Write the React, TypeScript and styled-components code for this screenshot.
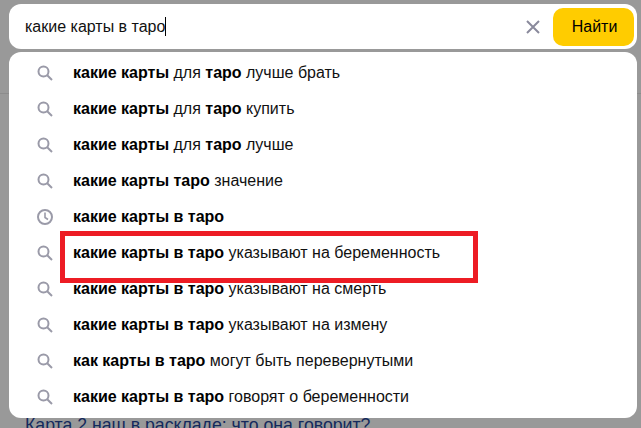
import { FC } from "react";
import styled, { createGlobalStyle } from "styled-components";

const GlobalStyle = createGlobalStyle`
  html, body {
    margin: 0;
    padding: 0;
    height: 100%;
    overflow: hidden;
    background: #999;
    font-family: "Liberation Sans", Arial, sans-serif;
  }
`;

const Page = styled.div`
  position: relative;
  width: 641px;
  height: 428px;
  overflow: hidden;
  padding: 4px 4px 0 9px;
  box-sizing: border-box;
  background: #999;
`;

const Divider = styled.div`
  position: absolute;
  left: 0;
  right: 0;
  top: 93px;
  height: 1px;
  background: #8c8c8c;
`;

const SearchBar = styled.div`
  position: relative;
  display: flex;
  align-items: center;
  height: 45px;
  padding: 0 3px 0 16px;
  background: #fff;
  border-radius: 12px;
`;

const Query = styled.div`
  flex: 1;
  font-size: 16px;
  color: #111;
`;

const Caret = styled.span`
  display: inline-block;
  width: 1px;
  height: 19px;
  background: #000;
  vertical-align: -4px;
`;

const ClearIcon = styled.svg`
  width: 16px;
  height: 16px;
  margin-right: 12px;
`;

const FindButton = styled.div`
  display: flex;
  align-items: center;
  justify-content: center;
  width: 81px;
  height: 38px;
  padding-left: 2px;
  box-sizing: border-box;
  background: #fc0;
  border-radius: 10px;
  font-size: 16px;
  color: #000;
`;

const Suggest = styled.div`
  position: relative;
  margin-top: 3px;
  height: 366px;
  box-sizing: border-box;
  padding-top: 3px;
  background: #fff;
  border-radius: 12px;
`;

const Row = styled.div`
  display: flex;
  align-items: center;
  height: 36px;
  padding-left: 27px;
  font-size: 16px;
  color: #111;
  white-space: nowrap;
`;

const RowIcon = styled.svg`
  flex: none;
  width: 18px;
  height: 18px;
  margin-right: 19px;
`;

const RowText = styled.span`
  padding-bottom: 1px;
`;

const Bold = styled.b`
  font-weight: 700;
  color: #000;
`;

const Highlight = styled.div`
  position: absolute;
  left: 51px;
  top: 179px;
  width: 418px;
  height: 52px;
  box-sizing: border-box;
  border: 5px solid #ed1c24;
`;

const Behind = styled.div`
  position: absolute;
  left: 25px;
  top: 415px;
  font-size: 17.7px;
  color: #14295c;
  white-space: nowrap;
`;

const SearchGlyph: FC = () => (
  <RowIcon viewBox="0 0 18 18" fill="none" stroke="#9a9aa8" strokeWidth="2">
    <circle cx="7.5" cy="7.5" r="5" />
    <path d="M11.2 11.2 L16 16" />
  </RowIcon>
);

const ClockGlyph: FC = () => (
  <RowIcon viewBox="0 0 18 18" fill="none" stroke="#9a9aa8" strokeWidth="2">
    <circle cx="9" cy="9" r="7" />
    <path d="M9 4.5 V9.5 L12 11.5" strokeWidth="1.6" />
  </RowIcon>
);

const rows = [
  { parts: [["какие карты", 1], [" для ", 0], ["таро", 1], [" лучше брать", 0]] },
  { parts: [["какие карты", 1], [" для ", 0], ["таро", 1], [" купить", 0]] },
  { parts: [["какие карты", 1], [" для ", 0], ["таро", 1], [" лучше", 0]] },
  { parts: [["какие карты таро", 1], [" значение", 0]] },
  { parts: [["какие карты в таро", 1]], history: true },
  { parts: [["какие карты в таро", 1], [" указывают на беременность", 0]] },
  { parts: [["какие карты в таро", 1], [" указывают на смерть", 0]] },
  { parts: [["какие карты в таро", 1], [" указывают на измену", 0]] },
  { parts: [["как карты в таро", 1], [" могут быть перевернутыми", 0]] },
  { parts: [["какие карты в таро", 1], [" говорят о беременности", 0]] },
] as { parts: [string, number][]; history?: boolean }[];

const App: FC = () => (
  <Page>
    <GlobalStyle />
    <Divider />
    <Behind>Карта 2 наш в раскладе: что она говорит?</Behind>
    <SearchBar>
      <Query>
        какие карты в таро
        <Caret />
      </Query>
      <ClearIcon viewBox="0 0 16 16" fill="none" stroke="#8a8a9c" strokeWidth="2">
        <path d="M2 2 L14 14 M14 2 L2 14" />
      </ClearIcon>
      <FindButton>Найти</FindButton>
    </SearchBar>
    <Suggest>
      {rows.map((row, i) => (
        <Row key={i}>
          {row.history ? <ClockGlyph /> : <SearchGlyph />}
          <RowText>
            {row.parts.map(([text, strong], j) =>
              strong ? <Bold key={j}>{text}</Bold> : <span key={j}>{text}</span>
            )}
          </RowText>
        </Row>
      ))}
      <Highlight />
    </Suggest>
  </Page>
);

export default App;
